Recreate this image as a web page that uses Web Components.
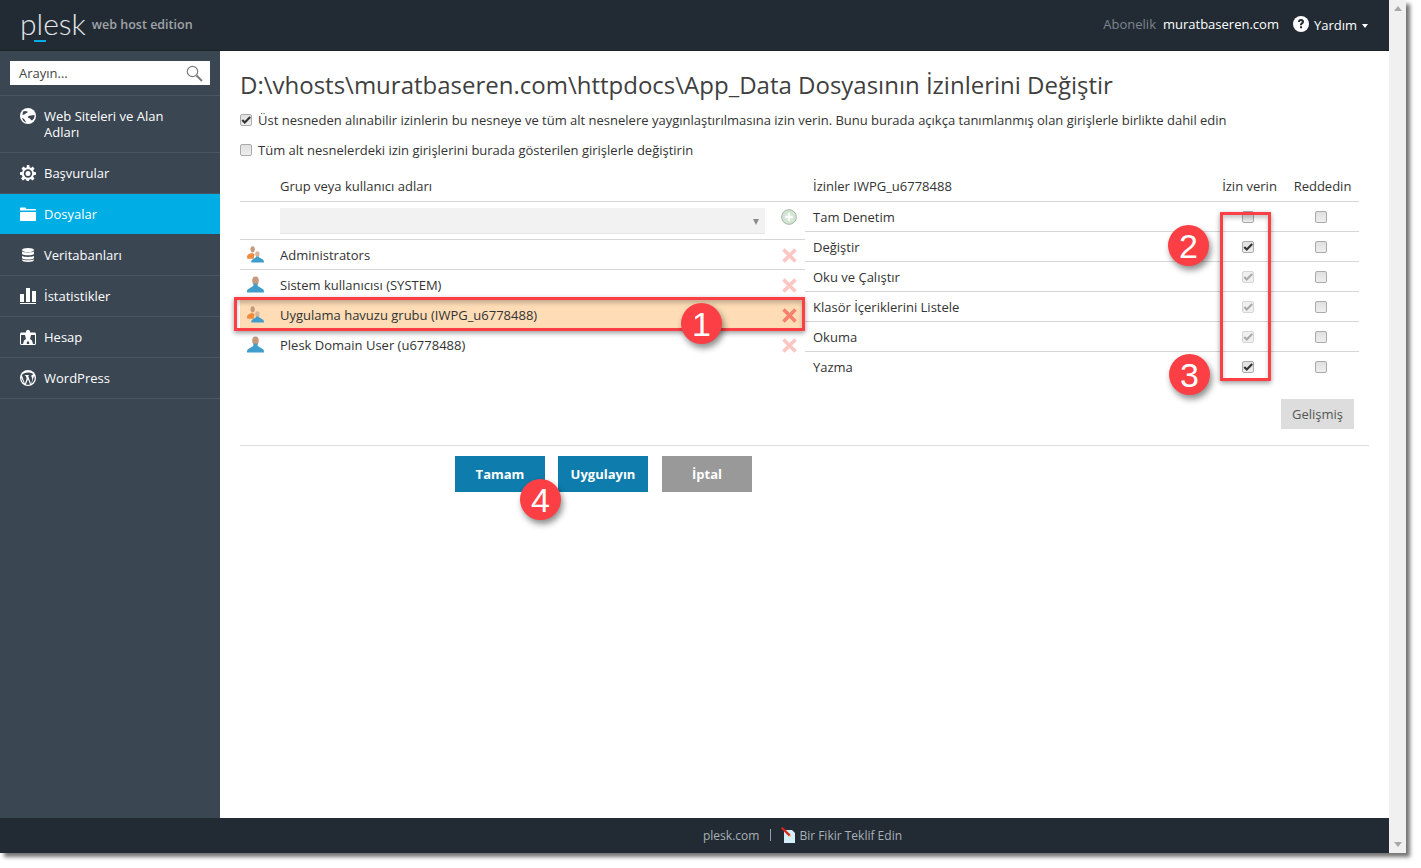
<!DOCTYPE html>
<html lang="tr">
<head>
<meta charset="utf-8">
<title>Plesk</title>
<style>
html, body { margin: 0; padding: 0; background: #fff; }
body { font: 13px "Open Sans", "Liberation Sans", sans-serif; color: #333; height: 868px; overflow: hidden; }
</style>
</head>
<body>

<plesk-window>
  <plesk-header slot="header"></plesk-header>
  <plesk-sidebar slot="sidebar">
    <nav-item icon="globe" tall>Web Siteleri ve Alan Adları</nav-item>
    <nav-item icon="gear">Başvurular</nav-item>
    <nav-item icon="folder" active>Dosyalar</nav-item>
    <nav-item icon="db">Veritabanları</nav-item>
    <nav-item icon="chart">İstatistikler</nav-item>
    <nav-item icon="account">Hesap</nav-item>
    <nav-item icon="wp">WordPress</nav-item>
  </plesk-sidebar>
  <perm-page slot="content"></perm-page>
  <plesk-footer slot="footer"></plesk-footer>
  <call-out slot="over" n="1" style="left:681px;top:303px"></call-out>
  <call-out slot="over" n="2" style="left:1168px;top:225px"></call-out>
  <call-out slot="over" n="3" style="left:1169px;top:354px"></call-out>
  <call-out slot="over" n="4" style="left:520px;top:479px"></call-out>
  <red-box slot="over" style="left:234px;top:297px;width:565px;height:28px"></red-box>
  <red-box slot="over" style="left:1220px;top:212px;width:45px;height:163px"></red-box>
</plesk-window>

<script>
const ICONS = {
  globe: `<svg width="16" height="16" viewBox="0 0 16 16"><circle cx="8" cy="8" r="8" fill="#fff"/><path d="M3 3.500c2-1 3-.6 4.500 0 .6 1-1 1.600-2 2-.5 1.200-2 1.200-3 1.500zM8 8.500c2-1.500 3.500-1 6.500-1.500.3 2-.6 4-2.500 5.500-1.500-.3-1.500-2-2.500-2.200-1-.3-1.800-.8-1.500-1.800zM2 10c1.500 0 3 1.500 4 4.500-2-.5-3.500-2.500-4-4.500z" fill="#3a4652"/></svg>`,
  gear: `<svg width="16" height="16" viewBox="0 0 16 16"><g fill="#fff"><path d="M6.800 0h2.400l.4 2.300 1.500.6L12.600 1.500l1.900 1.900-1.400 2 .6 1.400 2.300.4v2.600l-2.300.4-.6 1.400 1.400 2-1.900 1.900-2-1.400-1.400.6-.4 2.300H6.800l-.4-2.300-1.400-.6-2 1.400-1.900-1.900 1.400-2-.6-1.400L0 9.800V7.200l2.300-.4.600-1.400-1.400-2 1.900-1.900 2 1.400 1.400-.6z"/></g><circle cx="8" cy="8.500" r="4.200" fill="#3a4652"/><circle cx="8" cy="8.500" r="2.500" fill="#fff"/></svg>`,
  folder: `<svg width="16" height="14" viewBox="0 0 16 14"><path d="M0 1.500C0 .8.500.5 1 .5h4.500l1 1.500H15c.6 0 1 .4 1 1v.5H0z" fill="#fff"/><path d="M0 5h16v8c0 .6-.4 1-1 1H1c-.6 0-1-.4-1-1z" fill="#fff"/></svg>`,
  db: `<svg width="12" height="14" viewBox="0 0 12 14"><g fill="#fff"><ellipse cx="6" cy="2" rx="6" ry="2"/><path d="M0 3.200C1 4.800 11 4.800 12 3.200V6C11 7.800 1 7.800 0 6z"/><path d="M0 7.700C1 9.300 11 9.300 12 7.700v2.500C11 12 1 12 0 10.200z"/><path d="M0 11.500C1 12.600 11 12.600 12 11.500V12c0 1.200-2.500 2-6 2s-6-.8-6-2z"/></g></svg>`,
  chart: `<svg width="16" height="16" viewBox="0 0 16 16"><g fill="#fff"><rect x="0" y="6" width="4" height="8"/><rect x="6" y="0" width="4" height="14"/><rect x="12" y="3" width="4" height="11"/><rect x="0" y="15" width="16" height="1"/></g></svg>`,
  account: `<svg width="16" height="15" viewBox="0 0 16 15"><path fill-rule="evenodd" d="M1.500 2.500H6V1.500C6 .7 6.800 0 8 0s2 .7 2 1.500v1h4.500c.8 0 1.500.6 1.500 1.500v9.500c0 .8-.7 1.500-1.500 1.500h-13C.7 15 0 14.300 0 13.500V4c0-.9.700-1.500 1.500-1.500zM1 5v8.500c0 .3.200.5.500.5H3l1-3.500L6 9 5 5zM11 5l-1 4 2 1.500 1 3.500h1.500c.3 0 .5-.2.500-.5V5zM7 11.500L6.700 14h2.600L9 11.500z" fill="#fff"/></svg>`,
  wp: `<svg width="16" height="16" viewBox="0 0 16 16"><circle cx="8" cy="8" r="8" fill="#fff"/><path d="M1.800 5l3.100 8.800 1.800-5.300-1-2.800-.9-.1V5h4.300v.6l-1 .1 2.900 8.300 1-3.300c.4-1.300.3-2.400-.3-3.400-.6-1-.5-2.500.7-2.600l.6 0C13.800 3.800 11 2.500 8 2.500 5.400 2.500 3 3.400 1.800 5zM1.200 7.500c0 2.500 1.100 4.600 2.800 5.800zM8 9.200l-2.100 5.400c1.500.4 2.800.3 4.200-.1zM14 6l-2.500 7.700c2-1.300 3.200-3.200 3.200-5.400 0-1-.2-1.700-.7-2.300z" fill="#3a4652"/></svg>`
};

class PleskWindow extends HTMLElement {
  constructor() {
    super();
    const shadow = this.attachShadow({ mode: "open" });
    shadow.innerHTML = `<style>
      :host { display: block; position: relative; width: 1406px; height: 853px; background: #fff;
        box-shadow: 4px 4px 4px rgba(0,0,0,.55); }
      .frame { display: flex; height: 100%; }
      .main { flex: 1; min-width: 0; display: flex; flex-direction: column; }
      .mid { flex: 1; min-height: 0; display: flex; }
      .bar { width: 17px; background: #f0f0f0; display: flex; flex-direction: column; justify-content: space-between; align-items: center; padding: 6px 0 6px; box-sizing: border-box; }
      .up { width: 0; height: 0; border: 4px solid transparent; border-top: 0; border-bottom: 5px solid #a8a8a8; }
      .down { width: 0; height: 0; border: 4px solid transparent; border-bottom: 0; border-top: 5px solid #a8a8a8; }
      ::slotted(plesk-sidebar) { flex: 0 0 220px; }
      ::slotted(perm-page) { flex: 1; min-width: 0; }
    </style>
    <div class="frame">
      <div class="main">
        <slot name="header"></slot>
        <div class="mid"><slot name="sidebar"></slot><slot name="content"></slot></div>
        <slot name="footer"></slot>
      </div>
      <div class="bar"><span class="up"></span><span class="down"></span></div>
    </div>
    <slot name="over"></slot>`;
  }
}

class PleskHeader extends HTMLElement {
  constructor() {
    super();
    const shadow = this.attachShadow({ mode: "open" });
    shadow.innerHTML = `<style>
      :host { display: flex; align-items: center; height: 51px; background: #222b34; color: #fff; padding: 0 21px 0 20px; box-sizing: border-box; border-bottom: 1px solid #1b2229; }
      .logo { position: relative; font: 300 30px/1 Lato, "Open Sans", sans-serif; color: #e4e6e8; margin-top: -4px; }
      .logo i { position: absolute; left: 14px; top: 32px; width: 12px; height: 2px; background: #00aee6; }
      .ed { font-size: 12.5px; font-weight: 600; color: #a0a4a8; margin-left: 6px; margin-top: -2px; }
      .sp { flex: 1; }
      .ab { color: #7d858c; margin-top: -3px; }
      .dom { color: #fff; margin-left: 7px; margin-top: -3px; }
      .help { display: flex; margin-left: 14px; margin-top: -1px; align-items: center; }
      .help svg { margin-right: 5px; margin-top: -2px; }
      .caret { display: inline-block; margin-left: 5px; margin-top: 3px; border: 3.500px solid transparent; border-bottom: 0; border-top: 4px solid #fff; }
    </style>
    <div class="logo">plesk<i></i></div><div class="ed">web host edition</div>
    <div class="sp"></div>
    <span class="ab">Abonelik</span><span class="dom">muratbaseren.com</span>
    <span class="help"><svg width="16" height="16" viewBox="0 0 16 16"><circle cx="8" cy="8" r="8" fill="#fff"/><path d="M5 6c0-2 1.300-3 3.100-3S11 4 11 5.700c0 1.300-.8 1.900-1.500 2.400-.5.400-.6.600-.6 1.200H7V8.700c0-1 .5-1.500 1.100-2 .5-.4.800-.6.800-1 0-.5-.3-.8-.9-.8-.6 0-1 .4-1 1.100zM7 10.300h2v2H7z" fill="#222b34"/></svg>Yardım<i class="caret"></i></span>`;
  }
}

class PleskSidebar extends HTMLElement {
  constructor() {
    super();
    const shadow = this.attachShadow({ mode: "open" });
    shadow.innerHTML = `<style>
      :host { display: block; background: #3a4652; color: #fff; }
      .search { height: 45px; box-sizing: border-box; padding: 10px 10px 0; border-bottom: 1px solid #4b5662; }
      .box { height: 24px; background: #fff; display: flex; align-items: center; justify-content: space-between; padding: 0 7px 0 9px; color: #444; }
    </style>
    <div class="search"><div class="box"><span>Arayın...</span>
      <svg width="17" height="17" viewBox="0 0 17 17" fill="none" stroke="#7b7b7b"><circle cx="6.500" cy="6.500" r="5.200" stroke-width="1.200"/><path d="M10.500 10.500l5.500 5.500" stroke-width="2"/></svg>
    </div></div>
    <slot></slot>`;
  }
}

class NavItem extends HTMLElement {
  constructor() {
    super();
    const shadow = this.attachShadow({ mode: "open" });
    const name = this.getAttribute("icon");
    shadow.innerHTML = `<style>
      :host { display: flex; box-sizing: border-box; height: 41px; padding: 0 40px 0 20px; align-items: center; color: #fff; border-bottom: 1px solid #4b5662; line-height: 16px; }
      :host([tall]) { height: 57px; align-items: flex-start; padding-top: 12px; }
      :host([active]) { background: #00aee6; border-bottom-color: #3a4652; height: 41px; }
      .ic { flex: 0 0 16px; width: 16px; margin-right: 8px; display: flex; justify-content: center; align-items: center; height: 16px; }
    </style>
    <span class="ic">${ICONS[name] || ""}</span><span class="tx"><slot></slot></span>`;
  }
}

const PERSON = `<svg width="17" height="17" viewBox="0 0 18 18"><ellipse cx="9" cy="5" rx="3.500" ry="4.500" fill="#c79a7e"/><path d="M7 8h4l.4 2.500L17 14c.8.700 1 1.500 1 3.500H0c0-2 .2-2.800 1-3.500l5.600-3.500z" fill="#3f9ccb"/></svg>`;
const GROUP = `<svg width="17" height="17" viewBox="0 0 18 18"><ellipse cx="6" cy="3.500" rx="2.300" ry="3.300" fill="#c79a7e"/><path d="M0 11c.2-1.800 3-3 5-3.500l3 1-1 5H1C.3 13.500 0 12.500 0 11z" fill="#f08a3c"/><ellipse cx="11" cy="8.500" rx="2.300" ry="3" fill="#d8b59a"/><path d="M9.500 11h3l.2 1 4 2.200c.9.600 1.300 1.800 1.300 3.300H4.500c0-1.500.3-2.700 1.300-3.300l3.700-2.200z" fill="#3f9ccb"/></svg>`;

class PrincipalRow extends HTMLElement {
  constructor() {
    super();
    const shadow = this.attachShadow({ mode: "open" });
    const icon = this.getAttribute("kind") === "group" ? GROUP : PERSON;
    shadow.innerHTML = `<style>
      :host { display: flex; align-items: center; height: 30px; box-sizing: border-box; border-bottom: 1px solid #d6d6d6; }
      :host([last]) { border-bottom: 0; padding-bottom: 1px; }
      :host([selected]) { background: #fddcb6; border-bottom: 0; padding-bottom: 1px; }
      .i { width: 40px; padding-left: 7px; box-sizing: border-box; display: flex; margin-top: -1px; }
      .t { flex: 1; padding-top: 1px; }
      .x { width: 32px; display: flex; justify-content: center; margin-top: 1px; opacity: .3; }
      :host([selected]) .x { opacity: .6; }
    </style>
    <span class="i">${icon}</span><span class="t"><slot></slot></span>
    <span class="x"><svg width="15" height="15" viewBox="0 0 15 15"><path d="M1.500 1.500l12 12M13.500 1.500l-12 12" stroke="#f5453d" stroke-width="3.600" fill="none"/></svg></span>`;
  }
}

class PermCheck extends HTMLElement {
  constructor() {
    super();
    const shadow = this.attachShadow({ mode: "open" });
    shadow.innerHTML = `<style>
      :host { display: inline-block; width: 10px; height: 10px; box-sizing: content-box; flex: none; border: 1px solid #aaa; border-radius: 2px; background: linear-gradient(#e0e0e0,#eee); color: #333; line-height: 0; }
      :host([state="dim"]) { border-color: #d5d5d5; background: #f0f0f0; color: #aaa; }
      svg { display: block; }
    </style>
    ${this.hasAttribute("state") ? `<svg width="10" height="10" viewBox="0 0 12 12"><path d="M1.500 6l3 3L11 2.500" fill="none" stroke="currentColor" stroke-width="2.600"/></svg>` : ""}`;
  }
}

class PermRow extends HTMLElement {
  constructor() {
    super();
    const shadow = this.attachShadow({ mode: "open" });
    const st = this.getAttribute("allow");
    shadow.innerHTML = `<style>
      :host { display: flex; align-items: center; height: 30px; box-sizing: border-box; border-bottom: 1px solid #d6d6d6; padding-left: 8px; }
      :host([last]) { border-bottom: 0; padding-bottom: 1px; }
      .t { flex: 1; padding-top: 1px; }
      .c { width: 73px; box-sizing: border-box; padding-right: 3px; display: flex; justify-content: center; }
    </style>
    <span class="t"><slot></slot></span>
    <span class="c"><perm-check ${st ? `state="${st}"` : ""}></perm-check></span>
    <span class="c"><perm-check></perm-check></span>`;
  }
}

class PermPage extends HTMLElement {
  constructor() {
    super();
    const shadow = this.attachShadow({ mode: "open" });
    shadow.innerHTML = `<style>
      :host { display: block; padding: 17px 20px 0; box-sizing: border-box; background: #fff; color: #333; }
      h1 { margin: 0 0 4px; font-size: 24px; font-weight: 400; line-height: 33px; color: #3f3f3f; white-space: nowrap; }
      .opt { display: flex; align-items: center; height: 30px; gap: 6px; }
      .opt perm-check { margin-top: -1px; }
      .tables { display: flex; margin-top: 7px; padding-right: 10px; }
      .left { flex: 0 0 565px; }
      .right { flex: 1; }
      .head { display: flex; align-items: center; height: 30px; box-sizing: border-box; border-bottom: 1px solid #d6d6d6; padding-bottom: 2px; }
      .left .head { padding-left: 40px; }
      .right .head { padding-left: 8px; }
      .right .head b { font-weight: 400; flex: 1; }
      .right .head span { width: 73px; text-align: center; }
      .add { display: flex; align-items: flex-start; height: 38px; box-sizing: border-box; padding-left: 40px; border-bottom: 1px solid #d6d6d6; }
      .sel { width: 485px; height: 26px; background: #f2f2f2; border-bottom: 1px solid #e6e6e6; box-sizing: border-box; display: flex; align-items: center; justify-content: flex-end; padding-right: 6px; margin-top: 6px; }
      .sel i { border: 3.500px solid transparent; border-bottom: 0; border-top: 6px solid #8c8c8c; margin-top: 2px; }
      .plus { width: 40px; display: flex; padding-left: 16px; box-sizing: border-box; margin-top: 7px; }
      .adv { display: flex; justify-content: flex-end; padding: 17px 5px 0 0; }
      .adv button { width: 73px; height: 30px; border: 0; background: #ddd; color: #555; font: 13px "Open Sans", sans-serif; padding: 0; }
      hr { border: 0; border-top: 1px solid #ddd; margin: 16px 0 10px; }
      .btns { display: flex; padding-left: 215px; }
      .btns button { width: 90px; height: 36px; border: 0; padding: 0; color: #fff; background: #0e7cac; font: 700 13px "Open Sans", sans-serif; margin-right: 13px; }
      .btns button.n { margin-right: 14px; }
      .btns button.g { background: #999; }
    </style>
    <h1>D:\\vhosts\\muratbaseren.com\\httpdocs\\App_Data Dosyasının İzinlerini Değiştir</h1>
    <div class="opt"><perm-check state="on"></perm-check>Üst nesneden alınabilir izinlerin bu nesneye ve tüm alt nesnelere yaygınlaştırılmasına izin verin. Bunu burada açıkça tanımlanmış olan girişlerle birlikte dahil edin</div>
    <div class="opt"><perm-check></perm-check>Tüm alt nesnelerdeki izin girişlerini burada gösterilen girişlerle değiştirin</div>
    <div class="tables">
      <div class="left">
        <div class="head">Grup veya kullanıcı adları</div>
        <div class="add"><div class="sel"><i></i></div>
          <div class="plus"><svg width="16" height="16" viewBox="0 0 17 17"><circle cx="8.500" cy="8.500" r="7.800" fill="#d3e6d3" stroke="#a0b0a0"/><path d="M8.500 4.500v8M4.500 8.500h8" stroke="#fff" stroke-width="2.400"/></svg></div>
        </div>
        <principal-row kind="group">Administrators</principal-row>
        <principal-row kind="person">Sistem kullanıcısı (SYSTEM)</principal-row>
        <principal-row kind="group" selected>Uygulama havuzu grubu (IWPG_u6778488)</principal-row>
        <principal-row kind="person" last>Plesk Domain User (u6778488)</principal-row>
      </div>
      <div class="right">
        <div class="head"><b>İzinler IWPG_u6778488</b><span>İzin verin</span><span>Reddedin</span></div>
        <perm-row>Tam Denetim</perm-row>
        <perm-row allow="on">Değiştir</perm-row>
        <perm-row allow="dim">Oku ve Çalıştır</perm-row>
        <perm-row allow="dim">Klasör İçeriklerini Listele</perm-row>
        <perm-row allow="dim">Okuma</perm-row>
        <perm-row allow="on" last>Yazma</perm-row>
        <div class="adv"><button>Gelişmiş</button></div>
      </div>
    </div>
    <hr>
    <div class="btns"><button>Tamam</button><button class="n">Uygulayın</button><button class="g">İptal</button></div>`;
  }
}

class PleskFooter extends HTMLElement {
  constructor() {
    super();
    const shadow = this.attachShadow({ mode: "open" });
    shadow.innerHTML = `<style>
      :host { display: flex; align-items: center; height: 35px; background: #222b34; color: #a9b0b6; font-size: 12px; padding: 0 0 1px 703px; box-sizing: border-box; }
      .sep { width: 1px; height: 12px; background: #8fa3b2; margin: 0 10px 0 11px; }
      svg { margin-right: 4px; }
    </style>
    <span>plesk.com</span><span class="sep"></span>
    <svg width="14" height="16" viewBox="0 0 14 16"><path d="M3 3h8l3 3v10H3z" fill="#d5effa"/><path d="M0 1.500L1.500 0l8 7.500-1.500 2z" fill="#d8261c"/><path d="M8 9.500L9.500 7.500l.5 2.500z" fill="#f4c15c"/></svg>
    <span>Bir Fikir Teklif Edin</span>`;
  }
}

class CallOut extends HTMLElement {
  constructor() {
    super();
    const shadow = this.attachShadow({ mode: "open" });
    shadow.innerHTML = `<style>
      :host { position: absolute; z-index: 3; display: flex; width: 41px; height: 41px; border-radius: 50%; align-items: center; justify-content: center;
        background: #fb3f44; color: #fff; font: 34px/1 "Liberation Sans", Arial, sans-serif; box-shadow: 2px 4px 6px rgba(0,0,0,.45); }
    </style>${this.getAttribute("n")}`;
  }
}

class RedBox extends HTMLElement {
  constructor() {
    super();
    this.attachShadow({ mode: "open" }).innerHTML = `<style>
      :host { position: absolute; z-index: 2; display: block; border: 3px solid #fb3f44; box-shadow: 0 2px 5px rgba(0,0,0,.4), inset 0 3px 4px rgba(0,0,0,.22); }
    </style>`;
  }
}

customElements.define("perm-check", PermCheck);
customElements.define("nav-item", NavItem);
customElements.define("principal-row", PrincipalRow);
customElements.define("perm-row", PermRow);
customElements.define("perm-page", PermPage);
customElements.define("plesk-header", PleskHeader);
customElements.define("plesk-sidebar", PleskSidebar);
customElements.define("plesk-footer", PleskFooter);
customElements.define("call-out", CallOut);
customElements.define("red-box", RedBox);
customElements.define("plesk-window", PleskWindow);
</script>
</body>
</html>
